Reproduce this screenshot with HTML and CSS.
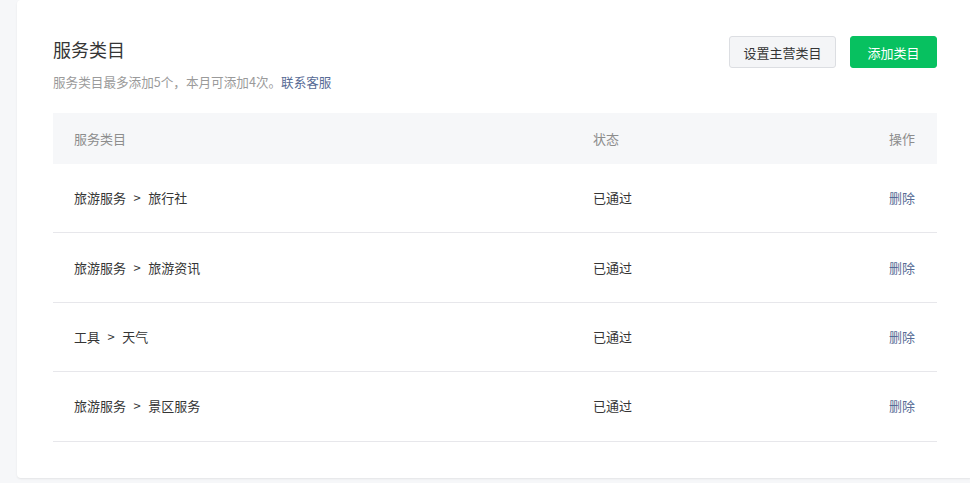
FILE: index.html
```html
<!DOCTYPE html>
<html lang="zh">
<head>
<meta charset="utf-8">
<title>服务类目</title>
<link rel="stylesheet" href="styles.css">
</head>
<body>
<div class="card">
  <div class="head">
    <div class="head-text">
      <h2 class="title">服务类目</h2>
      <p class="desc">服务类目最多添加5个，本月可添加4次。<a class="link" href="#">联系客服</a></p>
    </div>
    <div class="actions">
      <button class="btn btn-default">设置主营类目</button>
      <button class="btn btn-primary">添加类目</button>
    </div>
  </div>
  <div class="table">
    <div class="row row-head">
      <div class="c1">服务类目</div>
      <div class="c2">状态</div>
      <div class="c3">操作</div>
    </div>
    <div class="row">
      <div class="c1">旅游服务<span class="sep">&gt;</span>旅行社</div>
      <div class="c2">已通过</div>
      <div class="c3"><a class="link" href="#">删除</a></div>
    </div>
    <div class="row">
      <div class="c1">旅游服务<span class="sep">&gt;</span>旅游资讯</div>
      <div class="c2">已通过</div>
      <div class="c3"><a class="link" href="#">删除</a></div>
    </div>
    <div class="row">
      <div class="c1">工具<span class="sep">&gt;</span>天气</div>
      <div class="c2">已通过</div>
      <div class="c3"><a class="link" href="#">删除</a></div>
    </div>
    <div class="row">
      <div class="c1">旅游服务<span class="sep">&gt;</span>景区服务</div>
      <div class="c2">已通过</div>
      <div class="c3"><a class="link" href="#">删除</a></div>
    </div>
  </div>
</div>
</body>
</html>
```
FILE: styles.css
```css
html, body {
  margin: 0;
  padding: 0;
  height: 100%;
  overflow: hidden;
  background: #f6f7f9;
  font-family: "Noto Sans CJK SC", "Noto Sans", sans-serif;
  color: #353535;
}
.card {
  margin-left: 17px;
  width: 884px;
  padding: 36px 36px 36px 36px;
  background: #fff;
  border-radius: 4px;
  box-shadow: 0 1px 2px rgba(0, 0, 0, 0.08);
}
.head {
  display: flex;
  justify-content: space-between;
  align-items: flex-start;
  height: 77px;
}
.title {
  margin: 0;
  font-size: 18px;
  font-weight: 400;
  line-height: 26px;
  color: #353535;
}
.desc {
  margin: 11px 0 0;
  font-size: 12.6px;
  line-height: 18px;
  color: #9a9a9a;
}
.link {
  color: #576b95;
  text-decoration: none;
}
.actions {
  display: flex;
  gap: 14px;
}
.btn {
  height: 32px;
  border-radius: 3px;
  font-family: inherit;
  font-size: 13px;
  padding: 0;
  cursor: pointer;
}
.btn-default {
  width: 107px;
  background: #f4f5f7;
  border: 1px solid #dcdee2;
  color: #353535;
}
.btn-primary {
  width: 87px;
  background: #07c160;
  border: 1px solid #07c160;
  color: #fff;
}
.table {
  font-size: 13px;
}
.row {
  display: flex;
  align-items: center;
  height: 69.4px;
  box-sizing: border-box;
  padding: 0 22px 1px 21px;
  border-bottom: 1px solid #e7e7eb;
}
.row-head {
  height: 51px;
  padding-bottom: 0;
  background: #f6f7f9;
  border-bottom: none;
  color: #8d8d8d;
}
.c1 {
  flex: 0 0 519px;
}
.c2 {
  flex: 1;
}
.c3 {
  text-align: right;
}
.sep {
  margin: 0 7.5px;
}
```
